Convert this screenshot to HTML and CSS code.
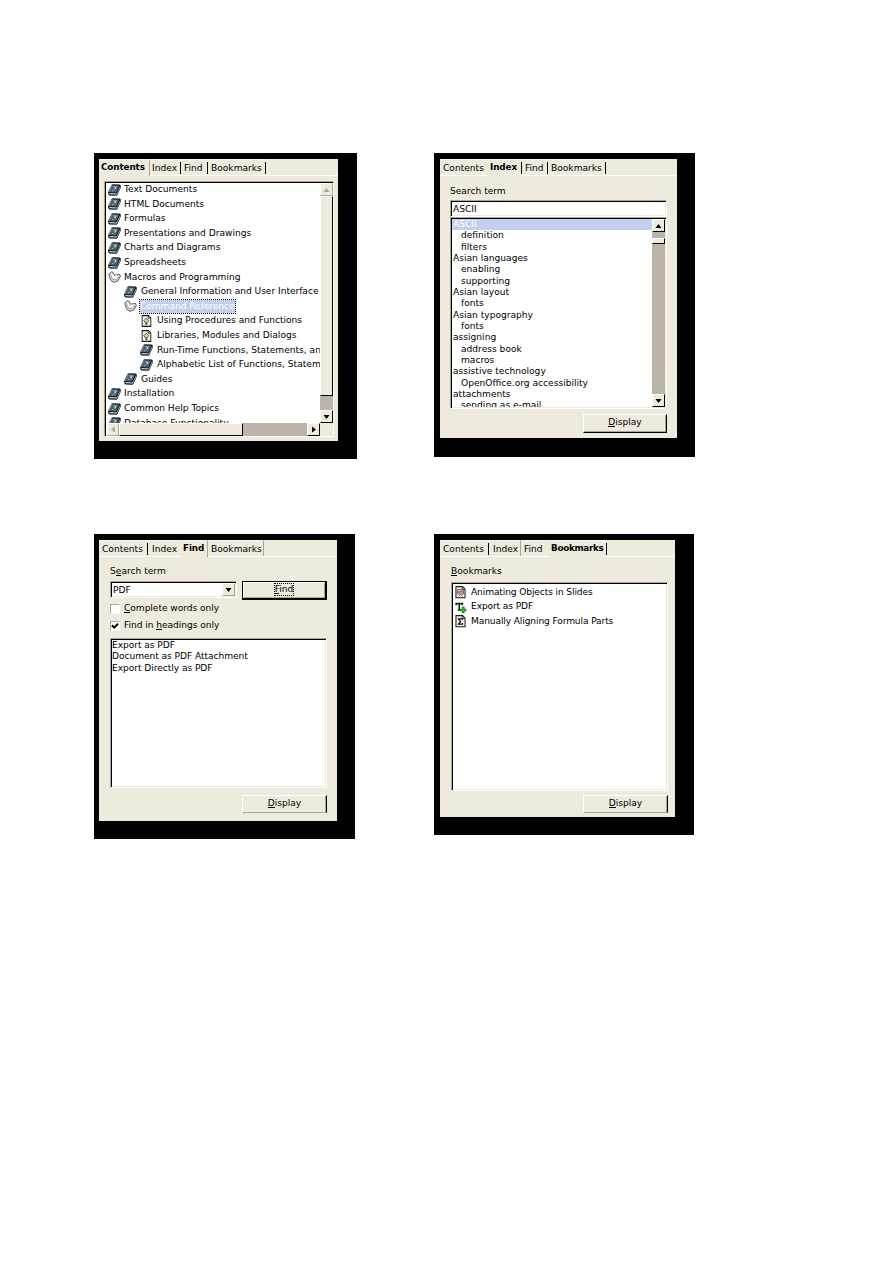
FILE: index.html
```
<!DOCTYPE html>
<html lang="en">
<head>
<meta charset="utf-8">
<title>Help tabs</title>
<link rel="stylesheet" href="styles.css">
</head>
<body>
<svg class="defs" aria-hidden="true">
  <symbol id="book" viewBox="0 0 13 12">
    <path d="M3.6.8 4.6.2 11.8.6 12.8 1.6 12.6 4 9.4 11 8.4 11.8 1.4 11.4.2 10 .2 8z" fill="#11161c"/>
    <path d="M4.4 1.2 11.2 1.5 8.2 8.4 1.2 8z" fill="#3f6188"/>
    <path d="M12 2.4V3.9L8.8 10.6 1.9 10.3 1.1 9.1 8.8 9.4z" fill="#d9dfe2"/>
    <path d="M5.4 3H8L7.4 4.7 6 5M4.9 6.1 4.6 7" fill="none" stroke="#e8cf62" stroke-width="1.1"/>
    <path d="M4.1 1.2 1 8" stroke="#93a7b8" stroke-width=".8"/>
  </symbol>
  <symbol id="open" viewBox="0 0 13 12">
    <path d="M.7 3.4 3.4.7 5.2 1.4 6.4 4.2 11.6 3.4 12.4 5.4 9.8 10 6 11.4 2.6 9.2z" fill="#d4d4d4" stroke="#555" stroke-width=".9"/>
    <path d="M3.4 1.4 5.8 5 11 4.2 8.6 8.6 5 8.8 2.8 5.6z" fill="#f6f6f6"/>
    <path d="M2.6 3.4 4.4 8.2 8.6 8.6 11.4 4.8" fill="none" stroke="#888" stroke-width=".7"/>
  </symbol>
  <symbol id="page" viewBox="0 0 11 13">
    <path d="M.7.7H7.6L10.3 3.4V12.3H.7z" fill="#f4f4f4" stroke="#151515" stroke-width="1.2"/>
    <path d="M7.3.8V3.6H10" fill="#aaa" stroke="#222" stroke-width=".8"/>
  </symbol>
  <symbol id="hint" viewBox="0 0 11 13">
    <use href="#page"/>
    <path d="M5.2 3.5 7.8 6 6.2 8.4H4.3L2.7 6z" fill="#e9d98c" stroke="#333" stroke-width=".9"/>
    <path d="M4.2 9.8H6.4" stroke="#222" stroke-width="1.5"/>
  </symbol>
  <symbol id="slide" viewBox="0 0 11 13">
    <use href="#page"/>
    <path d="M2.4 3.7H8.7V8.4H2.4z" fill="#ddd" stroke="#444" stroke-width=".8"/>
    <path d="M3.5 11 5.5 8.7 7.6 11" fill="none" stroke="#444" stroke-width=".8"/>
    <path d="M5.2 4.8H7.8V7H5.2z" fill="#e55528"/><path d="M3 5.5H5V7H3z" fill="#666"/>
  </symbol>
  <symbol id="textplus" viewBox="0 0 12 12">
    <path d="M1.8 4V2.5H7.8V4M4.8 2.5V8.6M3.4 8.7H6.2" fill="none" stroke="#222" stroke-width="1.5"/>
    <path d="M8.6 5.6V11.6M5.8 8.6H11.6" stroke="#064d06" stroke-width="2.4"/>
    <path d="M8.6 6V11.2M6.2 8.6H11.2" stroke="#22c522" stroke-width="1.5"/>
  </symbol>
  <symbol id="sigma" viewBox="0 0 11 13">
    <use href="#page"/>
    <path d="M7.6 5V4H3.4L5.6 6.7 3.4 9.4H7.6V8.3" fill="none" stroke="#111" stroke-width="1.3"/>
  </symbol>
  <symbol id="up" viewBox="0 0 7 4"><path d="M3.5 0 6.5 4H.5z" fill="currentColor"/></symbol>
  <symbol id="down" viewBox="0 0 7 4"><path d="M.5 0H6.5L3.5 4z" fill="currentColor"/></symbol>
  <symbol id="left" viewBox="0 0 4 7"><path d="M4 .5V6.5L0 3.5z" fill="currentColor"/></symbol>
  <symbol id="right" viewBox="0 0 4 7"><path d="M0 .5V6.5L4 3.5z" fill="currentColor"/></symbol>
</svg>
<main class="sheet">

  <section class="frame frame-contents">
    <div class="panel">
      <nav class="tabs">
        <div class="tab active w51">Contents</div><div class="tab sep-dark w31">Index</div><div class="tab sep-dark w27">Find</div><div class="tab sep-dark w58">Bookmarks</div>
      </nav>
      <div class="sunken tree">
        <ul class="tree-rows">
          <li><svg class="ico"><use href="#book"/></svg><span>Text Documents</span></li>
          <li><svg class="ico"><use href="#book"/></svg><span>HTML Documents</span></li>
          <li><svg class="ico"><use href="#book"/></svg><span>Formulas</span></li>
          <li><svg class="ico"><use href="#book"/></svg><span>Presentations and Drawings</span></li>
          <li><svg class="ico"><use href="#book"/></svg><span>Charts and Diagrams</span></li>
          <li><svg class="ico"><use href="#book"/></svg><span>Spreadsheets</span></li>
          <li><svg class="ico"><use href="#open"/></svg><span>Macros and Programming</span></li>
          <li class="l1"><svg class="ico"><use href="#book"/></svg><span class="snug">General Information and User Interface U</span></li>
          <li class="l1"><svg class="ico"><use href="#open"/></svg><span class="picked">Command Reference</span></li>
          <li class="l2"><svg class="ico"><use href="#hint"/></svg><span>Using Procedures and Functions</span></li>
          <li class="l2"><svg class="ico"><use href="#hint"/></svg><span>Libraries, Modules and Dialogs</span></li>
          <li class="l2"><svg class="ico"><use href="#book"/></svg><span>Run-Time Functions, Statements, an</span></li>
          <li class="l2"><svg class="ico"><use href="#book"/></svg><span>Alphabetic List of Functions, Statem</span></li>
          <li class="l1"><svg class="ico"><use href="#book"/></svg><span>Guides</span></li>
          <li><svg class="ico"><use href="#book"/></svg><span>Installation</span></li>
          <li><svg class="ico"><use href="#book"/></svg><span>Common Help Topics</span></li>
          <li><svg class="ico"><use href="#book"/></svg><span>Database Functionality</span></li>
        </ul>
        <div class="vbar">
          <div class="sb off"><svg class="av"><use href="#up"/></svg></div>
          <div class="thumb tall"></div><div class="grow"></div>
          <div class="sb"><svg class="av"><use href="#down"/></svg></div>
        </div>
        <div class="hbar">
          <div class="sb off narrow"><svg class="ah"><use href="#left"/></svg></div>
          <div class="thumb wide"></div><div class="grow"></div>
          <div class="sb"><svg class="ah"><use href="#right"/></svg></div>
        </div>
        <div class="corner"></div>
      </div>
    </div>
  </section>

  <section class="frame frame-index">
    <div class="panel">
      <nav class="tabs">
        <div class="tab w48">Contents</div><div class="tab active sep-dark w34">Index</div><div class="tab sep-dark w26">Find</div><div class="tab sep-dark w58">Bookmarks</div>
      </nav>
      <div class="body">
        <div class="label">Search term</div>
        <div class="sunken field">ASCII</div>
        <div class="sunken index">
          <ul class="rows">
            <li class="picked-row">ASCII</li>
            <li class="sub">definition</li>
            <li class="sub">filters</li>
            <li>Asian languages</li>
            <li class="sub">enabling</li>
            <li class="sub">supporting</li>
            <li>Asian layout</li>
            <li class="sub">fonts</li>
            <li>Asian typography</li>
            <li class="sub">fonts</li>
            <li>assigning</li>
            <li class="sub">address book</li>
            <li class="sub">macros</li>
            <li>assistive technology</li>
            <li class="sub">OpenOffice.org accessibility</li>
            <li>attachments</li>
            <li class="sub">sending as e-mail</li>
          </ul>
          <div class="vbar">
            <div class="sb"><svg class="av"><use href="#up"/></svg></div>
            <div class="gap"></div><div class="thumb short"></div><div class="grow"></div>
            <div class="sb"><svg class="av"><use href="#down"/></svg></div>
          </div>
        </div>
        <div class="button display"><span><u>D</u>isplay</span></div>
      </div>
    </div>
  </section>

  <section class="frame frame-find">
    <div class="panel">
      <nav class="tabs">
        <div class="tab sep-dark w49">Contents</div><div class="tab w32">Index</div><div class="tab active sep w28">Find</div><div class="tab sep w56">Bookmarks</div>
      </nav>
      <div class="body">
        <div class="label">S<u>e</u>arch term</div>
        <div class="query">
          <div class="sunken combo"><span>PDF</span><div class="sb"><svg class="av"><use href="#down"/></svg></div></div>
          <div class="button find"><span class="focus"><u>F</u>ind</span></div>
        </div>
        <div class="check"><div class="box"></div><span><u>C</u>omplete words only</span></div>
        <div class="check"><div class="box"><svg viewBox="0 0 8 8"><path d="M1 3.2 3.2 5.6 7 1.6" fill="none" stroke="#000" stroke-width="2"/></svg></div><span>Find in <u>h</u>eadings only</span></div>
        <ul class="sunken rows results">
          <li>Export as PDF</li>
          <li>Document as PDF Attachment</li>
          <li>Export Directly as PDF</li>
        </ul>
        <div class="button display"><span><u>D</u>isplay</span></div>
      </div>
    </div>
  </section>

  <section class="frame frame-marks">
    <div class="panel">
      <nav class="tabs">
        <div class="tab sep-dark w49">Contents</div><div class="tab sep w32">Index</div><div class="tab w28">Find</div><div class="tab active sep-dark w58">Bookmarks</div>
      </nav>
      <div class="body">
        <div class="label"><u>B</u>ookmarks</div>
        <ul class="sunken marks">
          <li><svg class="pg"><use href="#slide"/></svg><span>Animating Objects in Slides</span></li>
          <li><svg class="pg"><use href="#textplus"/></svg><span>Export as PDF</span></li>
          <li><svg class="pg"><use href="#sigma"/></svg><span>Manually Aligning Formula Parts</span></li>
        </ul>
        <div class="button display"><span><u>D</u>isplay</span></div>
      </div>
    </div>
  </section>
</main>
</body>
</html>
```
FILE: styles.css
```
* { box-sizing: border-box; }
body { margin: 0; background: #fff; color: #000; font: 9.1px/11px "DejaVu Sans", Verdana, sans-serif; }
ul { list-style: none; margin: 0; padding: 0; }
u { text-decoration: none; box-shadow: 0 -1px 0 #000 inset; }
.defs { position: absolute; width: 0; height: 0; }
.sheet { display: grid; grid-template-columns: 340px 340px; grid-template-rows: 381px 381px; align-items: start; justify-items: start; padding: 153px 0 0 94px; min-height: 1263px; }

.frame { background: #000; padding: 6px 0 0 5px; }
.frame-contents { width: 263px; height: 306px; }
.frame-index { width: 261px; height: 304px; padding-left: 6px; }
.frame-find { width: 261px; height: 305px; }
.frame-marks { width: 260px; height: 301px; padding-left: 6px; }
.panel { background: #eeeade; width: 239px; height: 282px; }
.frame-index .panel { width: 237px; height: 279px; }
.frame-find .panel { width: 238px; height: 281px; }
.frame-marks .panel { width: 235px; height: 277px; }

.tabs { display: flex; height: 17px; border-bottom: 1px solid #fff; }
.tab { height: 16px; padding: 3px 0 0 3px; white-space: nowrap; border-top: 1px solid #f8f6ef; border-right: 1px solid transparent; }
.tab.active { height: 17px; padding-top: 2px; padding-left: 2px; font-weight: bold; font-size: 8.8px; background: #eeeade; letter-spacing: -.1px; }
.tab.sep { border-right-color: #aaa69b; }
.tab.sep-dark { background: linear-gradient(#000, #000) right 3px / 1px 12px no-repeat; background-origin: border-box; }
.tab.active.sep-dark { background-color: #eeeade; }
.w26 { width: 26px; } .w27 { width: 27px; } .w28 { width: 28px; } .w31 { width: 31px; } .w32 { width: 32px; } .w34 { width: 34px; }
.w48 { width: 48px; } .w49 { width: 49px; } .w51 { width: 51px; } .w56 { width: 56px; } .w58 { width: 58px; }
.frame-contents .tab.active { border-right-color: #aaa69b; }
.frame-contents .w31 { padding-left: 2px; }
.frame-find .w32, .frame-marks .w32 { padding-left: 4px; }
.frame-find .tab.active { padding-left: 3px; }
.frame-marks .tab.active { letter-spacing: -.3px; }

.sunken { background: #fff; border: 1px solid; border-color: #aaa69b #fff #fff #aaa69b; box-shadow: inset 1px 1px 0 #000, inset -1px -1px 0 #eeeade; overflow: hidden; }
.tree { display: grid; grid-template-columns: 1fr 13px; grid-template-rows: 240px 13px; width: 230px; height: 256px; margin: 5px 0 0 5px; padding: 1px 0 0 2px; }
.tree-rows { overflow: hidden; min-width: 0; }
.tree-rows li { display: flex; align-items: center; height: 14.6px; white-space: nowrap; padding-left: 1px; }
.tree-rows li:first-child { margin-top: -.7px; }
.tree-rows li.l1 { padding-left: 17px; }
.tree-rows li.l2 { padding-left: 33px; }
.ico { width: 13px; height: 12px; flex: none; margin-right: 3px; }
.l1 .ico, .l2 .ico { margin-right: 4px; }
.snug { letter-spacing: -.03px; }
.picked { margin-left: -1px; background: #c3cfec; color: #fff; outline: 1px dotted #000; outline-offset: 0; height: 13px; line-height: 13px; letter-spacing: -.05px; }

.vbar, .hbar { display: flex; background: #bcb4ab; }
.vbar { flex-direction: column; width: 13px; flex: none; }
.sb, .thumb { background: #eeeade; border: 1px solid; border-color: #fff #000 #000 #fff; }
.sb { width: 13px; height: 13px; flex: none; display: flex; align-items: center; justify-content: center; }
.narrow { width: 12px; }
.off { color: #aaa69b; border-color: #fff #aaa69b #aaa69b #fff; }
.av { width: 7px; height: 4px; } .ah { width: 4px; height: 7px; }
.grow { flex: 1; }
.tall { height: 200px; } .wide { width: 124px; } .short { height: 6px; } .gap { height: 6px; }
.corner { background: #eeeade; }

.body { display: flex; flex-direction: column; padding: 10px 10px 0; }
.frame-find .body, .frame-marks .body { padding-left: 11px; }
.label { height: 15px; }
.frame-index .label { height: 14px; }
.frame-find .label, .frame-marks .label { margin-top: -1px; }
.field { width: 217px; height: 17px; padding: 3px 0 0 2px; }
.index { display: flex; width: 217px; height: 192px; padding: 1px; }
.index .rows { flex: 1; overflow: hidden; }
.index .rows li { padding-left: 1px; }
.index .rows li.sub { padding-left: 9px; }
.rows li { height: 11.33px; line-height: 11.33px; white-space: nowrap; }
.picked-row { background: #c3cfec; color: #fff; }
.button { width: 85px; height: 19px; display: flex; justify-content: center; padding-top: 2px; border: 1px solid; border-color: #fff #000 #000 #fff; box-shadow: inset -1px -1px 0 #aaa69b; }
.display { margin: 4px 0 0 132px; }
.frame-index .display { margin: 5px 0 0 133px; width: 84px; }
.frame-find .display, .frame-marks .display { height: 18px; border-bottom-color: #aaa69b; box-shadow: inset -1px 0 0 #aaa69b; }
.query { display: flex; gap: 5px; height: 19px; }
.combo { display: flex; justify-content: space-between; width: 127px; height: 17px; padding: 1px 1px 1px 2px; line-height: 14px; }
.combo .sb { border-color: #fff #aaa69b #aaa69b #fff; }
.find { border-width: 1px 2px 2px 1px; border-color: #000; box-shadow: inset 1px 1px 0 #fff, inset -1px -1px 0 #aaa69b; }
.focus { outline: 1px dotted #000; height: 11px; }
.check { display: flex; height: 17px; gap: 4px; padding-top: 3px; letter-spacing: -.05px; }
.box { width: 10px; height: 10px; margin-top: 1px; background: #fff; border: 1px solid; border-color: #aaa69b #fff #fff #aaa69b; }
.box svg { display: block; width: 8px; height: 8px; }
.results { width: 217px; height: 150px; margin-top: 4px; padding: 1px; letter-spacing: -.05px; }
.frame-find .display { margin-top: 7px; }
.marks { width: 217px; height: 209px; margin-top: 1px; padding: 2px 1px 1px 2px; letter-spacing: -.12px; }
.frame-marks .display { margin-top: 4px; }
.marks li { display: flex; align-items: center; height: 14.6px; white-space: nowrap; gap: 4px; }
.pg { width: 13px; height: 12.5px; flex: none; }
```
